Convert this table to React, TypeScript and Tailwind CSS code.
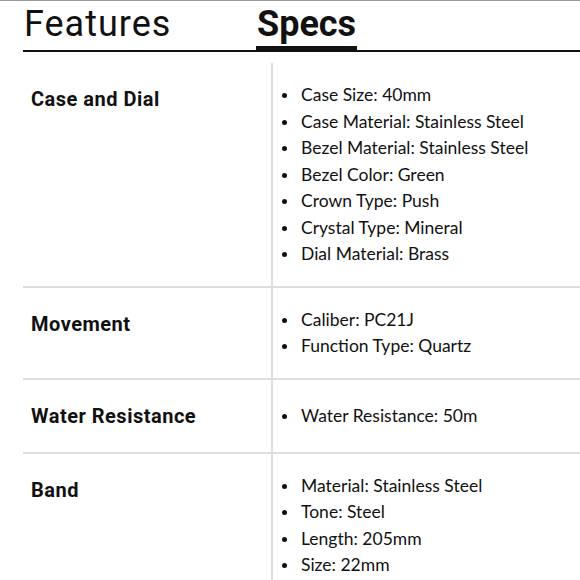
import React from "react";

const rows: { title: string; items: string[] }[] = [
  {
    title: "Case and Dial",
    items: [
      "Case Size: 40mm",
      "Case Material: Stainless Steel",
      "Bezel Material: Stainless Steel",
      "Bezel Color: Green",
      "Crown Type: Push",
      "Crystal Type: Mineral",
      "Dial Material: Brass",
    ],
  },
  { title: "Movement", items: ["Caliber: PC21J", "Function Type: Quartz"] },
  { title: "Water Resistance", items: ["Water Resistance: 50m"] },
  {
    title: "Band",
    items: ["Material: Stainless Steel", "Tone: Steel", "Length: 205mm", "Size: 22mm"],
  },
];

export default function App() {
  return (
    <div className="w-[580px] h-[580px] overflow-hidden bg-white border-t border-[#9a9a9a]">
      <div className="ml-[23px] flex items-end h-[51px] border-b-2 border-[#111]">
        <div className="w-[233px] pl-[1px] h-[49px] leading-[47px] text-[36px] tracking-[1px] text-[#111] font-['Roboto',sans-serif] font-normal">
          Features
        </div>
        <div className="h-[50px] mb-[-1px] w-[101px] border-b-[5px] border-[#111] leading-[47px] text-[36px] text-[#111] font-['Roboto',sans-serif] font-bold pl-[1px]">
          Specs
        </div>
      </div>
      <div className="ml-[23px] mt-[11px]">
        {rows.map((r, i) => (
          <div key={i} className="flex items-stretch border-b-2 border-[#dedede]">
            <div className="w-[250px] shrink-0 border-r-2 border-[#dedede] pl-[8px] pt-[22px] pb-[22px] text-[20px] leading-[28px] tracking-[0.5px] font-bold text-[#111] font-['Roboto',sans-serif]">
              {r.title}
            </div>
            <div className="flex-1 self-center pl-[9px] pt-[19px] pb-[18px]">
              {r.items.map((it, j) => (
                <div key={j} className="flex items-center h-[26.5px]">
                  <span className="w-[5px] h-[5px] rounded-full bg-[#111] shrink-0 mt-[1px]" />
                  <span className="ml-[14px] text-[17.5px] leading-[26.5px] text-[#111] font-['Lato',sans-serif] whitespace-nowrap">
                    {it}
                  </span>
                </div>
              ))}
            </div>
          </div>
        ))}
      </div>
    </div>
  );
}
